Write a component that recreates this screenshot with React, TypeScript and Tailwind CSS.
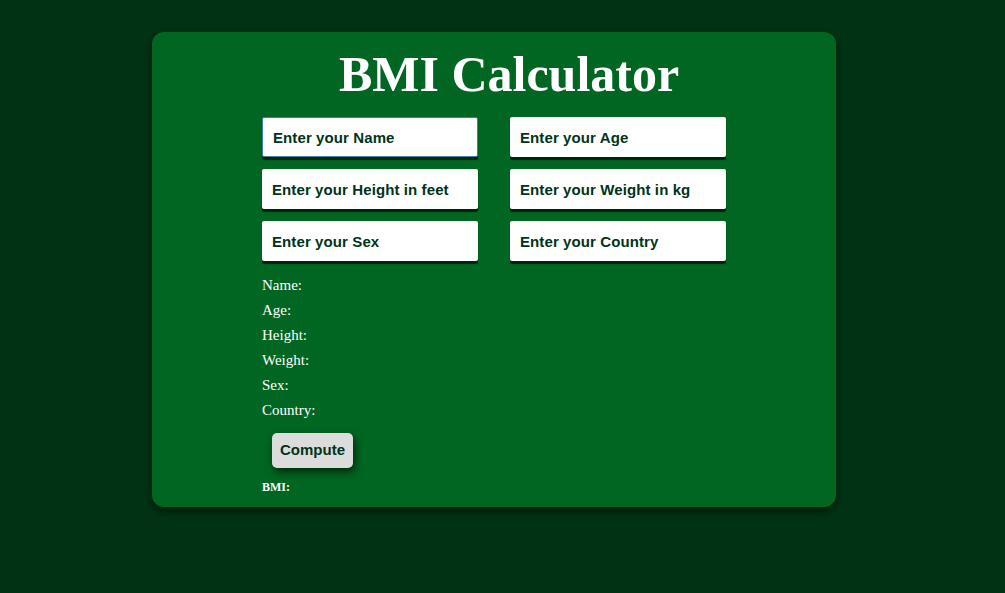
import React, { useState } from "react";

const fields = [
  { key: "name", placeholder: "Enter your Name" },
  { key: "age", placeholder: "Enter your Age" },
  { key: "height", placeholder: "Enter your Height in feet" },
  { key: "weight", placeholder: "Enter your Weight in kg" },
  { key: "sex", placeholder: "Enter your Sex" },
  { key: "country", placeholder: "Enter your Country" },
];

const labels = ["Name", "Age", "Height", "Weight", "Sex", "Country"];

export default function App() {
  const [values, setValues] = useState<Record<string, string>>({});

  return (
    <div className="min-h-[593px] w-full bg-[#003314] pt-8 font-['Liberation_Serif',serif]">
      {/* Card */}
      <div className="ml-[152px] w-[684px] rounded-xl bg-[#006622] pt-[12px] pb-[12px] shadow-[0_4px_8px_rgba(0,0,0,0.55)]">
        <h1 className="pl-[30px] text-center text-[50px] leading-[60px] font-bold text-white">BMI Calculator</h1>

        <div className="mx-auto mt-[13px] w-[464px]">
          {/* Inputs */}
          <div className="grid grid-cols-2 gap-x-8 gap-y-3">
            {fields.map((f, i) => (
              <input
                key={f.key}
                type="text"
                placeholder={f.placeholder}
                value={values[f.key] || ""}
                onChange={(e) => setValues({ ...values, [f.key]: e.target.value })}
                className={`h-10 w-[216px] rounded-[2px] bg-white px-[10px] font-['Liberation_Sans',Arial,sans-serif] text-[15px] tracking-[0.1px] font-bold text-[#00331a] outline-none placeholder:text-[#00331a] shadow-[0_3px_1px_rgba(0,30,10,0.9)] ${
                  i === 0 ? "border border-[#3f7fa0]" : ""
                }`}
              />
            ))}
          </div>

          {/* Output labels */}
          <div className="mt-[12px] text-[15px] leading-[25px] text-white">
            {labels.map((l) => (
              <p key={l}>{l}:</p>
            ))}
          </div>

          <button className="mt-[10px] ml-[10px] h-[35px] w-[81px] rounded-[5px] bg-[#dcdcdc] font-['Liberation_Sans',Arial,sans-serif] text-[15px] font-bold text-[#00331a] shadow-[2px_4px_8px_rgba(0,0,0,0.6)]">
            Compute
          </button>

          <p className="mt-[11px] text-[12px] leading-[16px] font-bold text-white">BMI:</p>
        </div>
      </div>
    </div>
  );
}
